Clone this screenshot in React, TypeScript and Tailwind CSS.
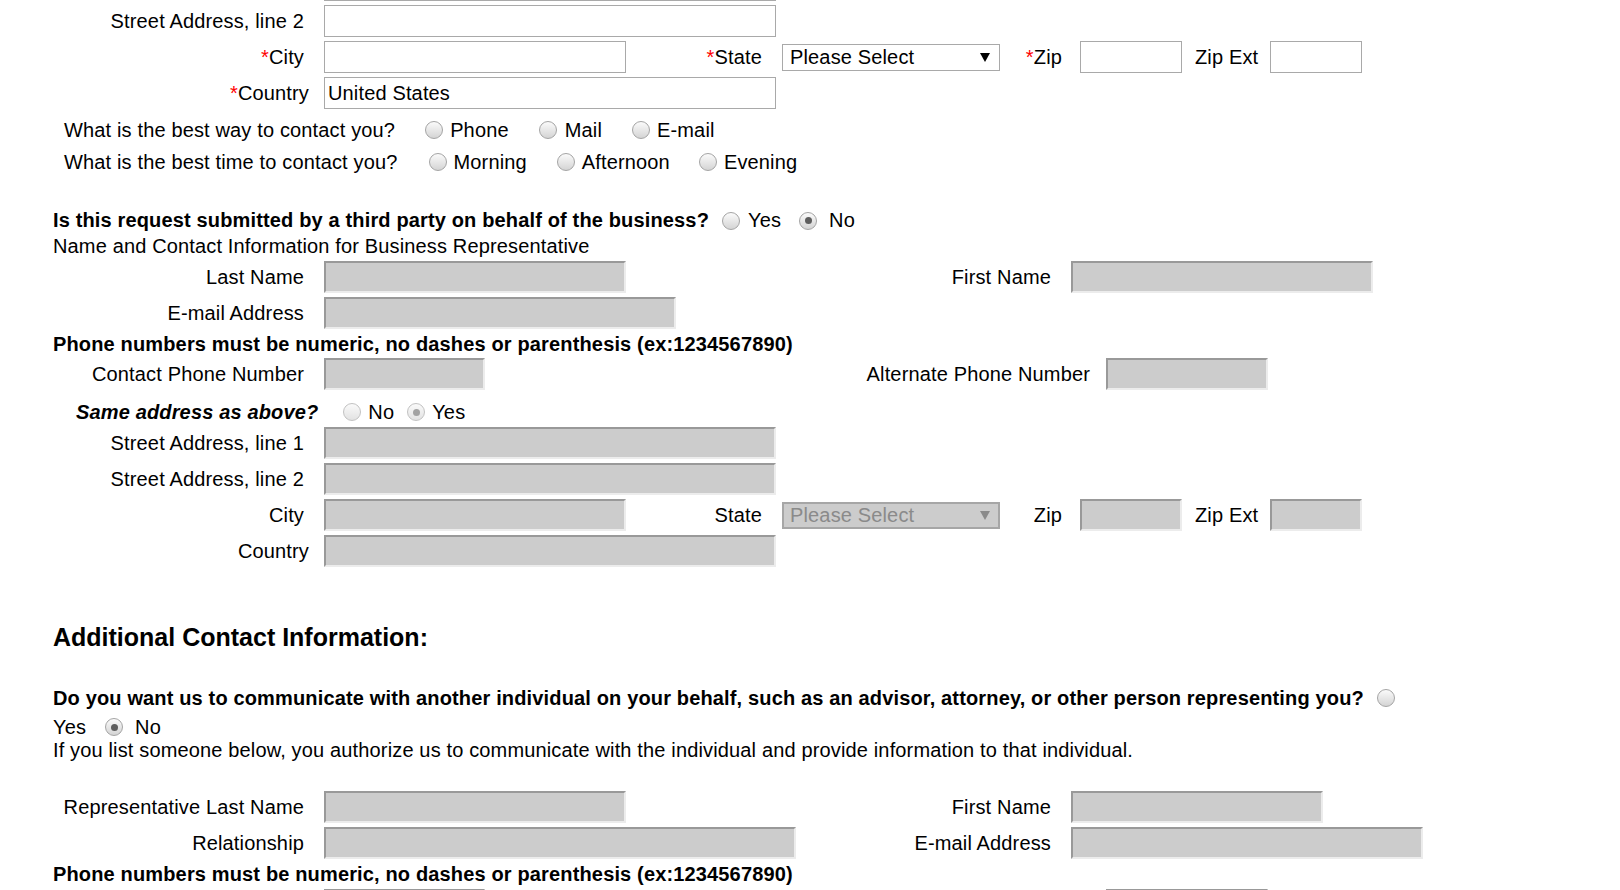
import React from "react";

function Req() {
  return <span className="text-[#ff0000]">*</span>;
}

function Label({ children, w = "w-[251px]" }: { children?: React.ReactNode; w?: string }) {
  return <div className={`${w} shrink-0 text-right whitespace-nowrap`}>{children}</div>;
}

function Box({ w, ml = "ml-[20px]", value, disabled }: { w: string; ml?: string; value?: string; disabled?: boolean }) {
  if (disabled) {
    return (
      <input
        disabled
        className={`${w} ${ml} h-[32px] shrink-0 bg-[#cccccc] border-2 border-t-[#999999] border-l-[#999999] border-b-[#ececec] border-r-[#ececec]`}
      />
    );
  }
  return (
    <input
      readOnly
      value={value ?? ""}
      className={`${w} ${ml} h-[32px] shrink-0 bg-white border border-[#a9a9a9] pl-[3px] text-black outline-none`}
    />
  );
}

function Select({ disabled }: { disabled?: boolean }) {
  if (disabled) {
    return (
      <div className="ml-[20px] w-[218px] h-[27px] shrink-0 flex items-center justify-between bg-[#cccccc] border-2 border-[#a6a6a6] pl-[6px] pr-[8px] text-[#8a8a8a]">
        <span>Please Select</span>
        <svg width="10" height="9" viewBox="0 0 10 9">
          <path d="M0 0 L10 0 L5 9 Z" fill="#8a8a8a" />
        </svg>
      </div>
    );
  }
  return (
    <div className="ml-[20px] w-[218px] h-[27px] shrink-0 flex items-center justify-between bg-white border border-[#a9a9a9] pl-[7px] pr-[9px] text-black">
      <span>Please Select</span>
      <svg width="10" height="9" viewBox="0 0 10 9">
        <path d="M0 0 L10 0 L5 9 Z" fill="#000000" />
      </svg>
    </div>
  );
}

function Radio({ checked, dim, ml }: { checked?: boolean; dim?: boolean; ml: string }) {
  return (
    <span
      className={`${ml} inline-flex w-[18px] h-[18px] shrink-0 rounded-full border ${
        dim ? "border-[#c2c2c2] from-[#fafafa] to-[#e2e2e2]" : "border-[#a4a4a4] from-[#fbfbfb] to-[#d4d4d4]"
      } bg-linear-to-b items-center justify-center`}
    >
      {checked && (
        <span className={dim ? "w-[7px] h-[7px] rounded-full bg-[#a2a2a2]" : "w-[7px] h-[7px] rounded-full bg-[#5e5e5e]"} />
      )}
    </span>
  );
}

function Opt({ children, ml = "ml-[7px]" }: { children: React.ReactNode; ml?: string }) {
  return <span className={`${ml} whitespace-nowrap`}>{children}</span>;
}

export default function App() {
  return (
    <div className="min-h-screen h-[890px] overflow-hidden bg-white text-black font-['Liberation_Sans',Arial,Helvetica,sans-serif] text-[20px] leading-[23px] tracking-[0.15px]">
      <div className="pl-[53px] -mt-[33px]">
        {/* Address block (first row scrolled out of view) */}
        <div className="flex items-center h-[36px]">
          <Label />
          <Box w="w-[452px]" />
        </div>
        <div className="flex items-center h-[36px]">
          <Label>Street Address, line 2</Label>
          <Box w="w-[452px]" />
        </div>
        <div className="flex items-center h-[36px]">
          <Label>
            <Req />
            City
          </Label>
          <Box w="w-[302px]" />
          <Label w="w-[136px]">
            <Req />
            State
          </Label>
          <Select />
          <Label w="w-[62px]">
            <Req />
            Zip
          </Label>
          <Box w="w-[102px]" ml="ml-[18px]" />
          <span className="ml-[13px] whitespace-nowrap">Zip Ext</span>
          <Box w="w-[92px]" ml="ml-[12px]" />
        </div>
        <div className="flex items-center h-[36px]">
          <Label w="w-[256px]">
            <Req />
            Country
          </Label>
          <Box w="w-[452px]" ml="ml-[15px]" value="United States" />
        </div>

        {/* Contact preferences */}
        <div className="flex items-center h-[36px] pt-[2px] pl-[11px]">
          <span className="whitespace-nowrap">What is the best way to contact you?</span>
          <Radio ml="ml-[30px]" />
          <Opt>Phone</Opt>
          <Radio ml="ml-[30px]" />
          <Opt ml="ml-[8px]">Mail</Opt>
          <Radio ml="ml-[30px]" />
          <Opt ml="ml-[7px]">E-mail</Opt>
        </div>
        <div className="flex items-center h-[28px] pt-[2px] pl-[11px]">
          <span className="whitespace-nowrap">What is the best time to contact you?</span>
          <Radio ml="ml-[31px]" />
          <Opt>Morning</Opt>
          <Radio ml="ml-[30px]" />
          <Opt>Afternoon</Opt>
          <Radio ml="ml-[29px]" />
          <Opt>Evening</Opt>
        </div>

        <div className="h-[30px]" />

        {/* Third party */}
        <div className="flex items-center h-[27px] pt-[4px]">
          <span className="font-bold whitespace-nowrap">Is this request submitted by a third party on behalf of the business?</span>
          <Radio ml="ml-[13px]" />
          <Opt ml="ml-[8px]">Yes</Opt>
          <Radio ml="ml-[18px]" checked />
          <Opt ml="ml-[12px]">No</Opt>
        </div>
        <div className="flex items-center h-[27px] pt-[2px]">
          <span className="whitespace-nowrap">Name and Contact Information for Business Representative</span>
        </div>
        <div className="flex items-center h-[36px]">
          <Label>Last Name</Label>
          <Box w="w-[302px]" disabled />
          <Label w="w-[425px]">First Name</Label>
          <Box w="w-[302px]" disabled />
        </div>
        <div className="flex items-center h-[36px]">
          <Label>E-mail Address</Label>
          <Box w="w-[352px]" disabled />
        </div>
        <div className="flex items-center h-[24px] pt-[2px]">
          <span className="font-bold whitespace-nowrap">Phone numbers must be numeric, no dashes or parenthesis (ex:1234567890)</span>
        </div>
        <div className="flex items-center h-[36px] pt-[2px]">
          <Label>Contact Phone Number</Label>
          <Box w="w-[161px]" disabled />
          <Label w="w-[605px]">Alternate Phone Number</Label>
          <Box w="w-[162px]" ml="ml-[16px]" disabled />
        </div>
        <div className="flex items-center h-[34px] pt-[8px]">
          <span className="ml-[23px] font-bold italic whitespace-nowrap">Same address as above?</span>
          <Radio ml="ml-[25px]" dim />
          <Opt>No</Opt>
          <Radio ml="ml-[13px]" dim checked />
          <Opt>Yes</Opt>
        </div>
        <div className="flex items-center h-[36px]">
          <Label>Street Address, line 1</Label>
          <Box w="w-[452px]" disabled />
        </div>
        <div className="flex items-center h-[36px]">
          <Label>Street Address, line 2</Label>
          <Box w="w-[452px]" disabled />
        </div>
        <div className="flex items-center h-[36px]">
          <Label>City</Label>
          <Box w="w-[302px]" disabled />
          <Label w="w-[136px]">State</Label>
          <Select disabled />
          <Label w="w-[62px]">Zip</Label>
          <Box w="w-[102px]" ml="ml-[18px]" disabled />
          <span className="ml-[13px] whitespace-nowrap">Zip Ext</span>
          <Box w="w-[92px]" ml="ml-[12px]" disabled />
        </div>
        <div className="flex items-center h-[36px]">
          <Label w="w-[256px]">Country</Label>
          <Box w="w-[452px]" ml="ml-[15px]" disabled />
        </div>

        <div className="h-[48px]" />

        {/* Additional contact */}
        <div className="flex items-center h-[40px]">
          <h3 className="text-[25px] leading-[29px] font-bold tracking-normal whitespace-nowrap">Additional Contact Information:</h3>
        </div>
        <div className="h-[27px]" />
        <div className="flex items-center h-[28px]">
          <span className="font-bold whitespace-nowrap">
            Do you want us to communicate with another individual on your behalf, such as an advisor, attorney, or other person representing you?
          </span>
          <Radio ml="ml-[13px]" />
        </div>
        <div className="flex items-center h-[28px] pt-[2px]">
          <span>Yes</span>
          <Radio ml="ml-[19px]" checked />
          <Opt ml="ml-[12px]">No</Opt>
        </div>
        <div className="flex items-center h-[20px]">
          <span className="whitespace-nowrap">
            If you list someone below, you authorize us to communicate with the individual and provide information to that individual.
          </span>
        </div>
        <div className="h-[29px]" />
        <div className="flex items-center h-[36px]">
          <Label>Representative Last Name</Label>
          <Box w="w-[302px]" disabled />
          <Label w="w-[425px]">First Name</Label>
          <Box w="w-[252px]" disabled />
        </div>
        <div className="flex items-center h-[36px]">
          <Label>Relationship</Label>
          <Box w="w-[472px]" disabled />
          <Label w="w-[255px]">E-mail Address</Label>
          <Box w="w-[352px]" disabled />
        </div>
        <div className="flex items-center h-[26px]">
          <span className="font-bold whitespace-nowrap">Phone numbers must be numeric, no dashes or parenthesis (ex:1234567890)</span>
        </div>
        {/* next row, scrolled below the fold */}
        <div className="flex items-center h-[36px]">
          <Label />
          <Box w="w-[161px]" disabled />
          <Label w="w-[605px]" />
          <Box w="w-[162px]" ml="ml-[16px]" disabled />
        </div>
      </div>
    </div>
  );
}
